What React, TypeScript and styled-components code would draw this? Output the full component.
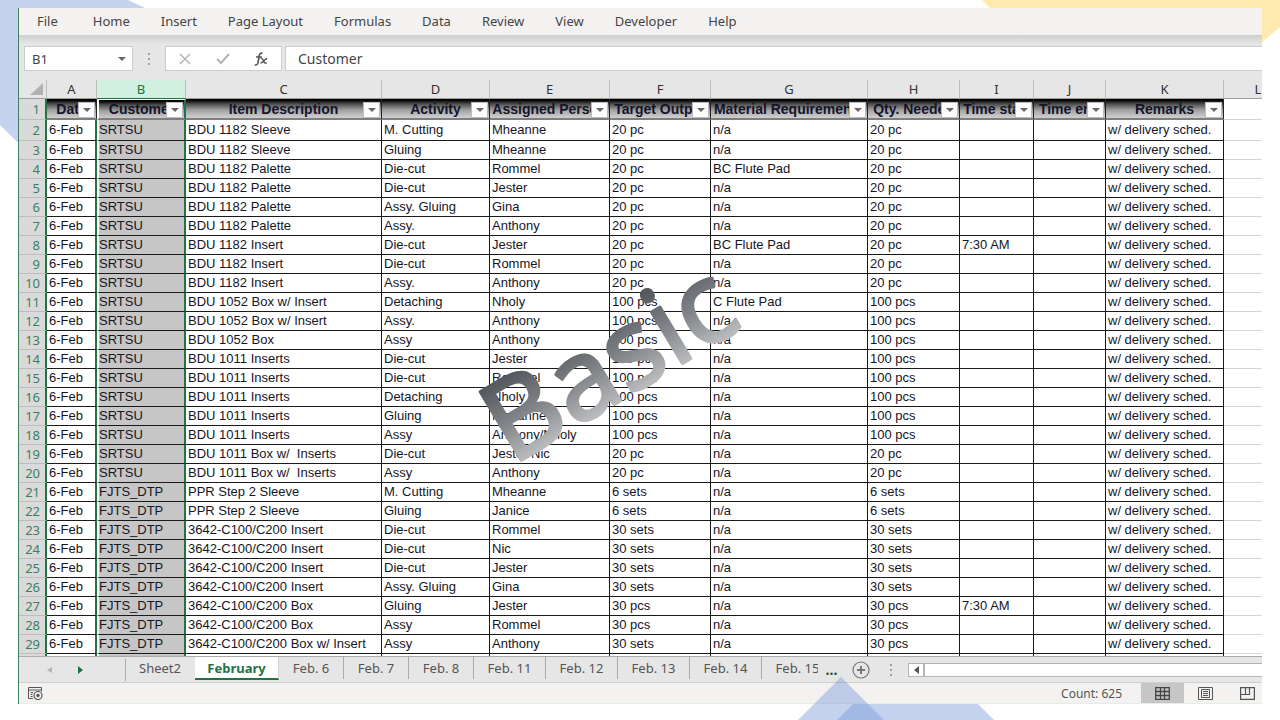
import React from "react";
import styled, { createGlobalStyle, css } from "styled-components";

const ui = `"Noto Sans", "Open Sans", sans-serif`;
const sheetFont = `"Liberation Sans", Arial, sans-serif`;

const GlobalStyle = createGlobalStyle`
  *, *::before, *::after { box-sizing: border-box; }
  body { margin: 0; background: #ffffff; font-family: ${ui}; color: #444444; }
  button, input { font: inherit; color: inherit; border: 0; background: none; padding: 0; margin: 0; border-radius: 0; }
`;

const Slide = styled.div`
  position: relative;
  display: flex;
  height: 100vh;
  padding: 8px 18px 16px;
  overflow: hidden;
`;

const Corner = styled.svg<{ $right?: boolean }>`
  position: absolute;
  top: 0;
  ${(p) => (p.$right ? "right: 0;" : "left: 0;")}
`;

const BottomShape = styled.svg`
  position: absolute;
  left: 62%;
  bottom: 0;
  pointer-events: none;
`;

const Workbook = styled.main`
  position: relative;
  flex: 1;
  min-width: 0;
  display: flex;
  flex-direction: column;
  background: #e6e6e6;
  border-left: 1px solid #3f8060;
  overflow: hidden;
`;

const Menu = styled.nav`
  flex: none;
  display: flex;
  height: 27px;
  padding-left: 18px;
  gap: 31px;
  background: #f3f2f1;
  font-size: 13px;
`;

const MenuItem = styled.button`
  line-height: 27px;
  white-space: nowrap;

  &&:first-child { padding-right: 4px; }
`;

const FormulaBar = styled.div`
  flex: none;
  display: flex;
  height: 45px;
  padding: 11px 0 9px 5px;
  background: linear-gradient(#cfcfcf, #e6e6e6 9px);
  font-size: 13px;
`;

const NameBox = styled.div`
  display: flex;
  align-items: center;
  width: 109px;
  padding: 0 6px 0 7px;
  background: #ffffff;
  border: 1px solid #cccccc;

  input { flex: 1; min-width: 0; outline: none; }
`;

const DotsBox = styled.span`
  display: flex;
  align-items: center;
  justify-content: center;
  width: 32px;
`;

const FormulaTools = styled.div`
  display: flex;
  align-items: center;
  width: 117px;
  justify-content: space-between;
  padding: 0 13px;
  margin-right: 3px;
  background: #ffffff;
  border: 1px solid #cccccc;

  button { display: flex; }
`;

const FormulaInput = styled.input`
  && {
    flex: 1;
    min-width: 0;
    padding-left: 12px;
    background: #ffffff;
    border: 1px solid #cccccc;
    border-right: 0;
    font-size: 14px;
  }
`;

const Grid = styled.div`
  flex: 1;
  min-height: 0;
  overflow: hidden;
  background: #ffffff;
`;

const Table = styled.table`
  table-layout: fixed;
  width: 100%;
  min-width: 1274px;
  border-collapse: separate;
  border-spacing: 0;
  font-family: ${sheetFont};
  font-size: 13px;
  color: #15151f;
`;

const ColumnHead = styled.th<{ $active?: boolean }>`
  height: 19px;
  padding: 0;
  font: 13px/18px ${ui};
  color: ${(p) => (p.$active ? "#217346" : "#333333")};
  background: ${(p) => (p.$active ? "#d2f0e0" : "#e6e6e6")};
  border-right: 1px solid #bdbdbd;
  border-bottom: 1px solid ${(p) => (p.$active ? "#217346" : "#9e9e9e")};
`;

const SelectAll = styled(ColumnHead)`
  svg { display: block; margin-left: auto; margin-right: 3px; }
`;

const RowHead = styled.th`
  padding: 0 5px 0 0;
  font: 13px/18px ${ui};
  text-align: right;
  color: #3d8060;
  background: #dadada;
  border-right: 2px solid #217346;
  border-bottom: 1px solid #bdbdbd;
`;

const selected = css`
  border-left: 2px solid #ffffff;
  border-right: 2px solid #217346;
`;

const FieldHead = styled.th<{ $selected?: boolean }>`
  position: relative;
  height: 21px;
  padding: 0;
  overflow: hidden;
  font-size: 14px;
  line-height: 18px;
  color: #14142a;
  background: linear-gradient(#000000 1px, #4e4e4e 5px, #a0a0a0 11px, #cccccc 18px);
  border-right: 1px solid #222222;
  border-bottom: 2px solid #7e7e7e;
  ${(p) => p.$selected && css`${selected} border-top: 1px solid #ffffff; line-height: 17px;`}
`;

const FieldName = styled.span`
  display: flex;
  justify-content: center;
  white-space: nowrap;
`;

const FilterButton = styled.button`
  && {
    position: absolute;
    right: 1px;
    bottom: 0;
    display: flex;
    align-items: center;
    justify-content: center;
    width: 17px;
    height: 16px;
    background: #fcfcfd;
    border: 1px solid #b9bcc6;
  }
`;

const Cell = styled.td<{ $selected?: boolean; $edge?: boolean }>`
  height: 19px;
  padding: 0 0 0 2px;
  line-height: 16px;
  overflow: hidden;
  white-space: pre;
  border-right: 1px solid #1a1a1a;
  border-bottom: 1px solid #1a1a1a;
  ${(p) => p.$edge && "border-right: 2px solid #217346;"}
  ${(p) => p.$selected && css`${selected} padding-left: 0; background: #c6c6c6;`}
`;

const OutsideCell = styled.td`
  border-bottom: 1px solid #d4d4d4;
`;

const DataRow = styled.tr<{ $tall?: boolean }>`
  height: ${(p) => (p.$tall ? 21 : 19)}px;
`;

const SheetBar = styled.div`
  flex: none;
  display: flex;
  align-items: center;
  height: 27px;
  border-top: 1px solid #ababab;
  border-bottom: 1px solid #d0d0d0;
  font-size: 13px;
  color: #555555;
`;

const SheetArrows = styled.div`
  display: flex;
  align-items: center;
  justify-content: space-between;
  width: 107px;
  height: 22px;
  padding: 0 42px 0 28px;
  border-right: 1px solid #ababab;

  button { display: flex; }
`;

const Tabs = styled.div`
  display: flex;
  align-self: stretch;
  width: 692px;
  overflow: hidden;
`;

const Tab = styled.button<{ $active?: boolean; $wide?: boolean; $plain?: boolean }>`
  && {
    flex: none;
    width: ${(p) => (p.$active ? 84 : p.$wide ? 72 : p.$plain ? 69 : 65)}px;
    height: 22px;
    white-space: nowrap;
    border-right: 1px solid ${(p) => (p.$plain ? "transparent" : "#ababab")};
    ${(p) =>
      p.$active &&
      css`
        height: 23px;
        font-weight: 700;
        color: #217346;
        background: #ffffff;
        border-right-color: #d0d0d0;
        border-bottom: 2px solid #217346;
      `}
  }
`;

const MoreTabs = styled.button`
  && { width: 34px; padding-right: 7px; font-size: 14px; font-weight: 700; color: #1d5236; }
`;

const AddSheet = styled.button`
  display: flex;
`;

const TabSplitter = styled(DotsBox)`
  width: 38px;
  padding-left: 4px;
`;

const ScrollBar = styled.div`
  flex: 1;
  display: flex;
  height: 14px;
  background: #ffffff;
  border: 1px solid #b5b5b5;
  border-right: 0;
`;

const ScrollArrow = styled.button`
  && {
    display: flex;
    align-items: center;
    justify-content: center;
    width: 16px;
    border-right: 2px solid #b5b5b5;
  }
`;

const StatusBar = styled.footer`
  flex: none;
  display: flex;
  align-items: center;
  height: 21px;
  padding-left: 8px;
  background: #f3f2f1;
  font-size: 12px;
  border-bottom: 1px solid #e3efe6;
`;

const Count = styled.span`
  margin-left: auto;
  margin-right: 19px;
  color: #555555;
`;

const ViewButton = styled.button<{ $active?: boolean }>`
  && {
    display: flex;
    align-items: center;
    justify-content: center;
    width: 43px;
    height: 20px;
    background: ${(p) => (p.$active ? "#c6c6c6" : "transparent")};
  }
`;

const LastView = styled(ViewButton)`
  && { width: 35px; justify-content: flex-start; padding-left: 13px; }
`;

const Watermark = styled.svg`
  position: absolute;
  left: 446px;
  top: 241px;
  overflow: visible;
  pointer-events: none;
`;

const Down = () => (
  <svg width="8" height="4" viewBox="0 0 8 4">
    <path d="M0 0H8L4 4Z" fill="#666" />
  </svg>
);

const Dots = () => (
  <svg width="2" height="12" viewBox="0 0 2 12" fill="#a0a0a0">
    <rect width="2" height="2" />
    <rect y="5" width="2" height="2" />
    <rect y="10" width="2" height="2" />
  </svg>
);

const menuItems = ["File", "Home", "Insert", "Page Layout", "Formulas", "Data", "Review", "View", "Developer", "Help"];

const columns = [
  { id: "A", width: 50, field: "Date" },
  { id: "B", width: 89, field: "Customer" },
  { id: "C", width: 196, field: "Item Description" },
  { id: "D", width: 108, field: "Activity" },
  { id: "E", width: 120, field: "Assigned Person" },
  { id: "F", width: 101, field: "Target Output" },
  { id: "G", width: 157, field: "Material Requirements" },
  { id: "H", width: 92, field: "Qty. Needed" },
  { id: "I", width: 74, field: "Time start" },
  { id: "J", width: 72, field: "Time end" },
  { id: "K", width: 118, field: "Remarks" },
];

type Job = [customer: string, item: string, activity: string, person: string, target: string, material: string, start?: string];

const jobs: Job[] = [
  ["SRTSU", "BDU 1182 Sleeve", "M. Cutting", "Mheanne", "20 pc", "n/a"],
  ["SRTSU", "BDU 1182 Sleeve", "Gluing", "Mheanne", "20 pc", "n/a"],
  ["SRTSU", "BDU 1182 Palette", "Die-cut", "Rommel", "20 pc", "BC Flute Pad"],
  ["SRTSU", "BDU 1182 Palette", "Die-cut", "Jester", "20 pc", "n/a"],
  ["SRTSU", "BDU 1182 Palette", "Assy. Gluing", "Gina", "20 pc", "n/a"],
  ["SRTSU", "BDU 1182 Palette", "Assy.", "Anthony", "20 pc", "n/a"],
  ["SRTSU", "BDU 1182 Insert", "Die-cut", "Jester", "20 pc", "BC Flute Pad", "7:30 AM"],
  ["SRTSU", "BDU 1182 Insert", "Die-cut", "Rommel", "20 pc", "n/a"],
  ["SRTSU", "BDU 1182 Insert", "Assy.", "Anthony", "20 pc", "n/a"],
  ["SRTSU", "BDU 1052 Box w/ Insert", "Detaching", "Nholy", "100 pcs", "C Flute Pad"],
  ["SRTSU", "BDU 1052 Box w/ Insert", "Assy.", "Anthony", "100 pcs", "n/a"],
  ["SRTSU", "BDU 1052 Box", "Assy", "Anthony", "100 pcs", "n/a"],
  ["SRTSU", "BDU 1011 Inserts", "Die-cut", "Jester", "100 pcs", "n/a"],
  ["SRTSU", "BDU 1011 Inserts", "Die-cut", "Rommel", "100 pcs", "n/a"],
  ["SRTSU", "BDU 1011 Inserts", "Detaching", "Nholy", "100 pcs", "n/a"],
  ["SRTSU", "BDU 1011 Inserts", "Gluing", "Mheanne", "100 pcs", "n/a"],
  ["SRTSU", "BDU 1011 Inserts", "Assy", "Anthony/Nholy", "100 pcs", "n/a"],
  ["SRTSU", "BDU 1011 Box w/  Inserts", "Die-cut", "Jester/Nic", "20 pc", "n/a"],
  ["SRTSU", "BDU 1011 Box w/  Inserts", "Assy", "Anthony", "20 pc", "n/a"],
  ["FJTS_DTP", "PPR Step 2 Sleeve", "M. Cutting", "Mheanne", "6 sets", "n/a"],
  ["FJTS_DTP", "PPR Step 2 Sleeve", "Gluing", "Janice", "6 sets", "n/a"],
  ["FJTS_DTP", "3642-C100/C200 Insert", "Die-cut", "Rommel", "30 sets", "n/a"],
  ["FJTS_DTP", "3642-C100/C200 Insert", "Die-cut", "Nic", "30 sets", "n/a"],
  ["FJTS_DTP", "3642-C100/C200 Insert", "Die-cut", "Jester", "30 sets", "n/a"],
  ["FJTS_DTP", "3642-C100/C200 Insert", "Assy. Gluing", "Gina", "30 sets", "n/a"],
  ["FJTS_DTP", "3642-C100/C200 Box", "Gluing", "Jester", "30 pcs", "n/a", "7:30 AM"],
  ["FJTS_DTP", "3642-C100/C200 Box", "Assy", "Rommel", "30 pcs", "n/a"],
  ["FJTS_DTP", "3642-C100/C200 Box w/ Insert", "Assy", "Anthony", "30 sets", "n/a"],
];

const sheets = ["Feb. 6", "Feb. 7", "Feb. 8", "Feb. 11", "Feb. 12", "Feb. 13", "Feb. 14", "Feb. 15"];

export default function App() {
  return (
    <Slide>
      <GlobalStyle />
      <Corner width="160" height="160" aria-hidden="true">
        <path d="M0 0H128L160 15V160H36L0 125Z" fill="#c5d3ee" />
      </Corner>
      <Corner $right width="300" height="60" aria-hidden="true">
        <path d="M2 0H300V27L262 59H60Z" fill="#ffe9ae" />
      </Corner>

      <Workbook>
        <Menu>
          {menuItems.map((m) => (
            <MenuItem key={m}>{m}</MenuItem>
          ))}
        </Menu>

        <FormulaBar>
          <NameBox>
            <input aria-label="Name box" defaultValue="B1" />
            <Down />
          </NameBox>
          <DotsBox><Dots /></DotsBox>
          <FormulaTools>
            <button aria-label="Cancel">
              <svg width="12" height="12" viewBox="0 0 12 12" stroke="#b5b5b5" strokeWidth="1.5" fill="none"><path d="M1 1L11 11M11 1L1 11" /></svg>
            </button>
            <button aria-label="Enter">
              <svg width="14" height="12" viewBox="0 0 14 12" stroke="#b5b5b5" strokeWidth="2" fill="none"><path d="M1 6L5 10L13 1" /></svg>
            </button>
            <button aria-label="Insert function">
              <svg width="14" height="14" viewBox="0 0 14 14" stroke="#555" strokeWidth="1.6" fill="none">
                <path d="M8.500 1.500C6.500 .5 5.500 2 5.200 4L4 10.500C3.700 12.500 2.500 13.500 .8 12.700M2 5H7.800" />
                <path d="M6.800 6.500C8.500 6 9 7 9.500 8.500C10 10.500 10.800 11.500 12.800 10.800M13.200 6.500C11 6.500 9 11 6.500 11" strokeWidth="1.400" />
              </svg>
            </button>
          </FormulaTools>
          <FormulaInput aria-label="Formula" defaultValue="Customer" />
        </FormulaBar>

        <Grid>
          <Table>
            <colgroup>
              <col style={{ width: 28 }} />
              {columns.map((c) => (
                <col key={c.id} style={{ width: c.width }} />
              ))}
              <col />
            </colgroup>
            <thead>
              <tr>
                <SelectAll aria-label="Select all">
                  <svg width="13" height="12" viewBox="0 0 13 12"><path d="M13 0V12H0Z" fill="#b1b1b1" /></svg>
                </SelectAll>
                {columns.map((c) => (
                  <ColumnHead key={c.id} $active={c.id === "B"}>{c.id}</ColumnHead>
                ))}
                <ColumnHead>L</ColumnHead>
              </tr>
            </thead>
            <tbody>
              <tr>
                <RowHead>1</RowHead>
                {columns.map((c) => (
                  <FieldHead key={c.id} $selected={c.id === "B"}>
                    <FieldName>{c.field}</FieldName>
                    <FilterButton aria-label={`Filter ${c.field}`}><Down /></FilterButton>
                  </FieldHead>
                ))}
                <OutsideCell />
              </tr>
              {jobs.map(([customer, item, activity, person, target, material, start], i) => (
                <DataRow key={i} $tall={i === 0}>
                  <RowHead>{i + 2}</RowHead>
                  <Cell $edge>6-Feb</Cell>
                  <Cell $selected>{customer}</Cell>
                  <Cell>{item}</Cell>
                  <Cell>{activity}</Cell>
                  <Cell>{person}</Cell>
                  <Cell>{target}</Cell>
                  <Cell>{material}</Cell>
                  <Cell>{i === 27 ? "30 pcs" : target}</Cell>
                  <Cell>{start}</Cell>
                  <Cell />
                  <Cell>w/ delivery sched.</Cell>
                  <OutsideCell />
                </DataRow>
              ))}
              <DataRow>
                <RowHead />
                <Cell $edge />
                <Cell $selected />
                {columns.slice(2).map((c) => (
                  <Cell key={c.id} />
                ))}
                <OutsideCell />
              </DataRow>
            </tbody>
          </Table>
        </Grid>

        <SheetBar>
          <SheetArrows>
            <button aria-label="Previous sheet"><svg width="5" height="6" viewBox="0 0 5 6"><path d="M5 0V6L0 3Z" fill="#b5b5b5" /></svg></button>
            <button aria-label="Next sheet"><svg width="5" height="8" viewBox="0 0 5 8"><path d="M0 0V8L5 4Z" fill="#217346" /></svg></button>
          </SheetArrows>
          <Tabs>
            <Tab $plain>Sheet2</Tab>
            <Tab $active>February</Tab>
            {sheets.map((s) => (
              <Tab key={s} $wide={s.length > 6}>{s}</Tab>
            ))}
          </Tabs>
          <MoreTabs aria-label="More sheets">...</MoreTabs>
          <AddSheet aria-label="New sheet">
            <svg width="18" height="18" viewBox="0 0 18 18" fill="none" stroke="#777">
              <circle cx="9" cy="9" r="8" strokeWidth="1.200" />
              <path d="M9 5V13M5 9H13" strokeWidth="2" />
            </svg>
          </AddSheet>
          <TabSplitter><Dots /></TabSplitter>
          <ScrollBar>
            <ScrollArrow aria-label="Scroll left"><svg width="5" height="8" viewBox="0 0 5 8"><path d="M5 0V8L0 4Z" fill="#555" /></svg></ScrollArrow>
          </ScrollBar>
        </SheetBar>

        <StatusBar>
          <svg width="16" height="13" viewBox="0 0 16 13" fill="none" stroke="#555">
            <path d="M6 11.500H1.500V.5H14.500V4.500M1.500 3H14.500M3.500 5.500H6M3.500 7.500H5.500M3.500 9.500H5.500" />
            <circle cx="11" cy="8.500" r="4" strokeWidth="1.200" />
            <circle cx="11" cy="8.500" r="1.300" fill="#555" />
          </svg>
          <Count>Count: 625</Count>
          <ViewButton $active aria-label="Normal view">
            <svg width="15" height="13" viewBox="0 0 15 13" fill="none" stroke="#444" strokeWidth="1.300"><path d="M.7.7H14.300V12.300H.7ZM.5 4.500H14.500M.5 8.500H14.500M5.500 .5V12.500M9.500 .5V12.500" /></svg>
          </ViewButton>
          <ViewButton aria-label="Page layout view">
            <svg width="15" height="13" viewBox="0 0 15 13" fill="none" stroke="#555"><path d="M.5.5H14.500V12.500H.5ZM3.500 2.500H11.500V10.500H3.500ZM5 4.500H10M5 6.500H10M5 8.500H10" /></svg>
          </ViewButton>
          <LastView aria-label="Page break preview">
            <svg width="15" height="13" viewBox="0 0 15 13" fill="none" stroke="#555" strokeWidth="1.200"><path d="M.6.6H14.400V12.400H.6ZM5.500 .5V7.500M.5 7.500H9.500V.5" /></svg>
          </LastView>
        </StatusBar>
      </Workbook>

      <Watermark width="330" height="250" viewBox="0 0 330 250">
        <defs>
          <linearGradient id="steel" gradientUnits="userSpaceOnUse" x1="0" y1="-80" x2="0" y2="0">
            <stop offset="0" stopColor="#55585d" />
            <stop offset="0.5" stopColor="#808387" />
            <stop offset="1" stopColor="#b8babc" />
          </linearGradient>
        </defs>
        <text transform="translate(66 225) rotate(-31)" fontFamily="Noto Sans, Open Sans, sans-serif" fontSize="112" fill="url(#steel)" stroke="url(#steel)" strokeWidth="3" strokeLinejoin="round">Basic</text>
      </Watermark>

      <BottomShape width="210" height="43" aria-hidden="true">
        <path d="M47 0L90 43H4Z" fill="#6f92d6" fillOpacity="0.4" />
        <path d="M59 27H184L200 43H43Z" fill="#6f92d6" fillOpacity="0.4" />
      </BottomShape>
    </Slide>
  );
}
